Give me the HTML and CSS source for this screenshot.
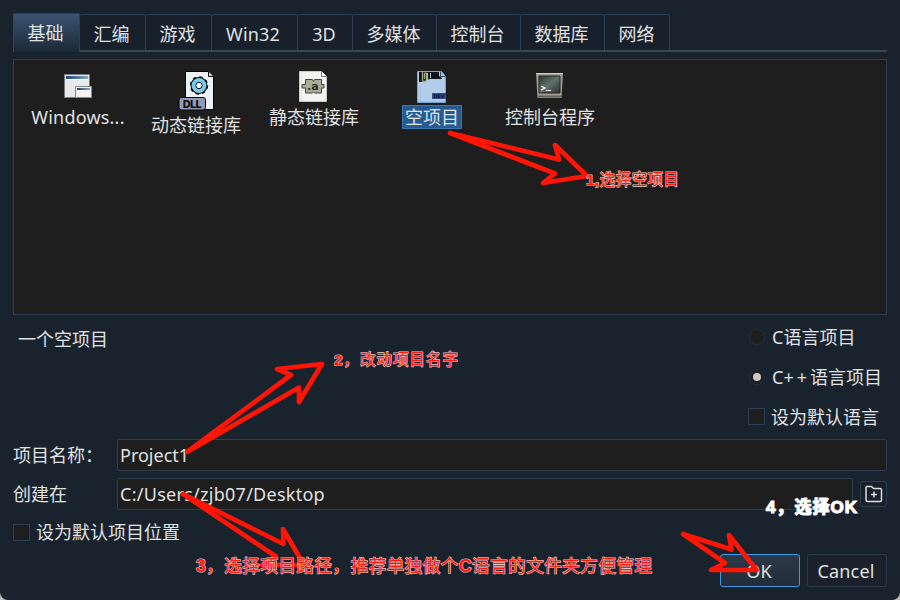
FILE: index.html
```
<!DOCTYPE html>
<html lang="zh-CN">
<head>
<meta charset="utf-8">
<title>新建项目</title>
<link rel="stylesheet" href="styles.css">
</head>
<body>
<main class="dialog">
  <nav class="tabs">
    <div class="tab active">基础</div>
    <div class="tab t65">汇编</div>
    <div class="tab t65">游戏</div>
    <div class="tab t85">Win32</div>
    <div class="tab t54">3D</div>
    <div class="tab t83">多媒体</div>
    <div class="tab t83">控制台</div>
    <div class="tab t83">数据库</div>
    <div class="tab t64">网络</div>
  </nav>
  <section class="templates">
    <div class="template">
      <svg class="icon" width="32" height="32" viewBox="0 0 32 32">
        <defs><linearGradient id="bar"><stop offset="0" stop-color="#1d4370"/><stop offset="1" stop-color="#83a9cd"/></linearGradient></defs>
        <path d="M2.500 3.500h25v23h-25z" fill="#e9e9ea" stroke="#77797b"/>
        <path d="M4 5h22v3H4z" fill="url(#bar)"/><path d="M4 8.500h22" stroke="#fff"/>
        <path d="M13.500 15.500h16v11h-16z" fill="#f2f2f2" stroke="#858789"/>
        <path d="M15 17h13v2H15z" fill="url(#bar)"/>
      </svg>
      <span class="name wide">Windows...</span>
    </div>
    <div class="template">
      <svg class="icon" width="40" height="40" viewBox="0 0 40 40">
        <path d="M9.500.500h23l5 5v33h-28z" fill="#edf3f5" stroke="#050505"/>
        <path d="M32.500.500v5h5" fill="#f4d59a" stroke="#050505"/>
        <circle cx="23" cy="14.500" r="7.700" fill="none" stroke="#050505" stroke-width="3" stroke-dasharray="3.100 2.950"/>
        <circle cx="23" cy="14.500" r="6" fill="#fff" stroke="#050505" stroke-width="5"/>
        <circle cx="23" cy="14.500" r="5.500" fill="#fff" stroke="#74cbee" stroke-width="4"/>
        <circle cx="23" cy="14.500" r="3.200" fill="#fff" stroke="#050505"/>
        <rect x="3" y="26.500" width="26.500" height="12.500" rx="2.500" fill="#9299b7" stroke="#050505"/>
        <text class="dll" x="6.500" y="36.500" textLength="19">DLL</text>
      </svg>
      <span class="name">动态链接库</span>
    </div>
    <div class="template">
      <svg class="icon" width="32" height="32" viewBox="0 0 32 32">
        <path d="M1.500.500h22l5 5v25h-27z" fill="#f3f3f1" stroke="#cacac7"/><path d="M23.500.500v5h5" fill="#fff" stroke="#777"/>
        <path d="M3.500 1v29" stroke="#d4d4d4" stroke-dasharray="1 1"/>
        <path d="M7.500 8.500h7l1 2 1-2h7v5h2.500v3.500h-2.500v5h-7l-1-1-1 1h-7v-5H4v-3.500h3.500z" fill="#a9ad93" stroke="#41443b"/>
        <text class="lib-a" x="9" y="18.500">.a</text>
      </svg>
      <span class="name">静态链接库</span>
    </div>
    <div class="template selected">
      <svg class="icon" width="32" height="32" viewBox="0 0 32 32">
        <path d="M1.500.500h24l4 5v26h-28z" fill="#b2cdea" stroke="#79a3d1"/>
        <path d="M3 11V1h20v4l3 2v1H14L5 11z" fill="#10151c"/>
        <path d="M10 2h2v7h-2zM14 2h1v5h-1z" fill="#a9c6e7"/>
        <path d="M24.500.500v5h5" fill="#a9c6e7" stroke="#2c4a70"/>
        <path d="M6.500 1v8q2 4 4 0V3q-1-2-2 0v5" fill="none" stroke="#a3a87d" stroke-width="1.300"/>
        <path d="M2 30.500h27M4.500 14v16" stroke="#a2c2e5"/>
        <path d="M16 22h14v6H16z" fill="#304e91"/><text class="dev" x="17.500" y="27" textLength="11">DEV</text>
      </svg>
      <span class="name">空项目</span>
    </div>
    <div class="template">
      <svg class="icon" width="32" height="32" viewBox="0 0 32 32">
        <defs><linearGradient id="screen" x2="1" y2="1"><stop stop-color="#263b36"/><stop offset=".5" stop-color="#66716b"/><stop offset="1" stop-color="#26302d"/></linearGradient></defs>
        <path d="M2 2h27l-1.500 25h-24z" fill="#a29c94"/><path d="M2 2.500h27" stroke="#d2cdc5"/>
        <path d="M4 25.500h24" stroke="#686159" stroke-width="2"/>
        <path d="M5 5h21v17H5z" fill="url(#screen)" stroke="#272725"/>
        <path d="M7 15l4 2-4 2M12 19.500h5" fill="none" stroke="#fff" stroke-width="1.200"/>
      </svg>
      <span class="name">控制台程序</span>
    </div>
  </section>
  <section class="details">
    <p class="description">一个空项目</p>
    <div class="options">
      <label class="option"><i class="radio"></i>C语言项目</label>
      <label class="option"><i class="radio checked"></i><span>C<span class="plus">++</span>语言项目</span></label>
      <label class="option box"><i class="check"></i>设为默认语言</label>
    </div>
  </section>
  <div class="row name-row"><label class="caption">项目名称：</label><div class="field">Project1</div></div>
  <div class="row path-row"><label class="caption">创建在</label><div class="field path">C:/Users/zjb07/Desktop</div>
    <div class="browse"><svg width="18" height="18" viewBox="0 0 18 18"><path d="M1 14.500V2.500q0-1 1-1h4.500l2 2H15q1.500 0 1.500 1.500v10q0 1.500-1.500 1.500H2.500Q1 16.500 1 14.500zM9 6.500v6M6 9.500h6" fill="none" stroke="#deded9" stroke-width="1.500"/></svg></div>
  </div>
  <label class="default-location"><i class="check"></i>设为默认项目位置</label>
  <footer class="actions"><div class="button primary">OK</div><div class="button">Cancel</div></footer>
  <svg class="notes" width="900" height="600" viewBox="0 0 900 600">
    <g class="arrows">
      <path d="M450 133L559 159.500 555 145 587 176 543 183 555 173.500z"/>
      <path d="M187 452L291 375 277 369 322 364 299 402 299 387.500z"/>
      <path d="M183 494L283.500 544 283 529 304 565H262L276 556.500z"/>
      <path d="M683 534L731.500 549.500 729 535 756.500 570H711L725 563z"/>
    </g>
    <text class="note" x="586" y="185" textLength="93"><tspan class="latin">1,</tspan>选择空项目</text>
    <text class="note" x="334" y="365" textLength="124"><tspan class="latin">2</tspan>，改动项目名字</text>
    <text class="note long" x="196" y="572" textLength="456"><tspan class="latin">3</tspan>，选择项目路径，推荐单独做个<tspan class="latin">C</tspan>语言的文件夹方便管理</text>
    <text class="note white" x="766" y="513" textLength="91">4，选择OK</text>
  </svg>
</main>
</body>
</html>
```
FILE: styles.css
```
* { box-sizing: border-box; }
body { margin: 0; background: #b9bbb8; }
.dialog {
  position: relative;
  width: 900px;
  height: 600px;
  padding: 13px 13px 0;
  display: flex;
  flex-direction: column;
  overflow: hidden;
  border-radius: 0 0 8px 8px;
  background: #19232d;
  color: #e0e1e3;
  font: 18px/26px "Noto Sans", "Noto Sans CJK SC", sans-serif;
}
.tabs { display: flex; align-items: flex-end; height: 39px; border-bottom: 2px solid #3b4651; }
.tab {
  height: 36px;
  padding: 6px 2px 0 0;
  border: 1px solid #2c4054;
  border-left: 0;
  border-bottom: 0;
  border-radius: 2px 2px 0 0;
  background: #18202b;
  text-align: center;
  width: 66px;
}
.active { width: 67px; height: 39px; margin-bottom: -2px; border-left: 1px solid #32475d; background: linear-gradient(#3b5370, #1b2936); }
.t85 { width: 86px; padding-right: 3px; letter-spacing: .15px; }
.t54 { width: 55px; }
.t83 { width: 84px; }
.t64 { width: 65px; padding-right: 1px; }
.templates { display: flex; height: 256px; margin-top: 7px; padding: 11px 5px; border: 1px solid #2c3e50; background: #1e1e1e; }
.template { display: flex; flex-direction: column; align-items: center; width: 118px; }
.icon { display: block; flex: none; }
.name { margin-top: 3px; height: 24px; padding: 0 2px; line-height: 22px; white-space: nowrap; }
.wide { letter-spacing: .2px; }
.selected .name { margin-top: 2px; border: 1px solid #3977b2; background: #245b92; line-height: 22px; }
.dll { font: 700 10px "DejaVu Sans", sans-serif; fill: #090909; }
.lib-a { font: 700 11px "DejaVu Sans", sans-serif; fill: #292c26; }
.dev { font: 700 5px "DejaVu Sans", sans-serif; fill: #09132b; }
.details { display: flex; justify-content: space-between; height: 124px; }
.description { margin: 11px 0 0 5px; }
.options { width: 139px; padding-top: 9px; }
.option { display: flex; align-items: center; height: 26px; margin-bottom: 14px; gap: 7px; white-space: nowrap; }
.option.box { gap: 6px; }
.plus { letter-spacing: 3px; }
.radio { display: grid; place-items: center; width: 16px; height: 16px; margin: -1px 0 0 1px; border: 1px solid #222f3b; border-radius: 50%; background: #1e1e1e; }
.checked::after { content: ""; width: 8px; height: 8px; border-radius: 50%; background: #c9c9c9; }
.check { flex: none; width: 17px; height: 17px; margin-top: -2px; border: 1px solid #2b4156; background: #1e1e1e; }
.row { display: flex; height: 32px; }
.path-row { margin-top: 7px; }
.caption { width: 104px; line-height: 33px; white-space: nowrap; }
.field { flex: 1; padding-left: 2px; border: 1px solid #2c3e50; border-radius: 2px; background: #1e1e1e; line-height: 30px; }
.path { letter-spacing: .27px; }
.browse { display: grid; place-items: center; width: 27px; height: 26px; margin: 3px 0 0 7px; border: 1px solid #2c3e50; border-radius: 3px; background: #18202b; }
.default-location { display: flex; align-items: center; gap: 6px; height: 26px; margin-top: 9px; }
.default-location .check { margin-top: 0; }
.actions { display: flex; justify-content: flex-end; gap: 7px; margin-top: 9px; }
.button { width: 80px; height: 33px; padding-right: 2px; border: 1px solid #2b3b4d; border-radius: 3px; background: #1a212b; line-height: 32px; text-align: center; letter-spacing: .2px; }
.primary { border-color: #4597e8; background: linear-gradient(#2c3948, #212c36); }
.notes { position: absolute; left: 0; top: 0; }
.arrows { fill: none; stroke: #ff1505; stroke-width: 4.7px; stroke-linejoin: round; }
.note { font: 400 15.5px "Liberation Sans", "Noto Sans CJK SC", sans-serif; fill: #ff170d; stroke: #f4c4c0; stroke-width: 1.2px; paint-order: stroke; }
.latin { font-weight: 700; }
.long { font-size: 17.5px; }
.white { font-size: 17px; font-weight: 700; fill: #fff; stroke: #fff; }
```
